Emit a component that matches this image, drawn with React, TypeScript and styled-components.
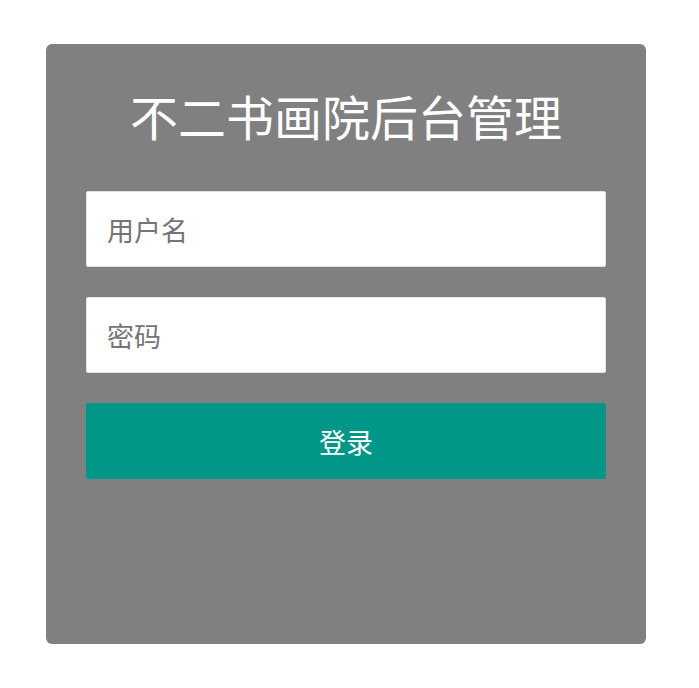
import styled, { createGlobalStyle } from "styled-components";

const Global = createGlobalStyle`
    html, body {
        margin: 0;
        background: #fff;
        font-family: "Noto Sans CJK SC", "Noto Sans", sans-serif;
    }
`;

const Page = styled.div`
    padding: 44px 0 0 46px;
`;

const Card = styled.form`
    box-sizing: border-box;
    width: 600px;
    height: 600px;
    background: #808080;
    border-radius: 6px;
    padding: 47px 40px 0;
    display: flex;
    flex-direction: column;
    gap: 30px;
`;

const Title = styled.h1`
    margin: 0 0 22px;
    color: #fff;
    font-size: 48px;
    font-weight: 400;
    line-height: 48px;
    text-align: center;
`;

const Field = styled.input`
    box-sizing: border-box;
    width: 100%;
    height: 76px;
    margin: 0;
    padding: 0 20px;
    border: 1px solid #e2e2e2;
    border-radius: 2px;
    background: #fff;
    color: #333;
    font-family: inherit;
    font-size: 27px;
    outline: none;
    &::placeholder {
        color: #757575;
    }
`;

const Submit = styled.button`
    width: 100%;
    height: 76px;
    border: none;
    border-radius: 2px;
    background: #009688;
    color: #fff;
    font-family: inherit;
    font-size: 27px;
    cursor: pointer;
`;

function App() {
    return (
        <Page>
            <Global />
            <Card onSubmit={e => e.preventDefault()}>
                <Title>不二书画院后台管理</Title>
                <Field type="text" placeholder="用户名" />
                <Field type="password" placeholder="密码" />
                <Submit type="submit">登录</Submit>
            </Card>
        </Page>
    );
}

export default App;
